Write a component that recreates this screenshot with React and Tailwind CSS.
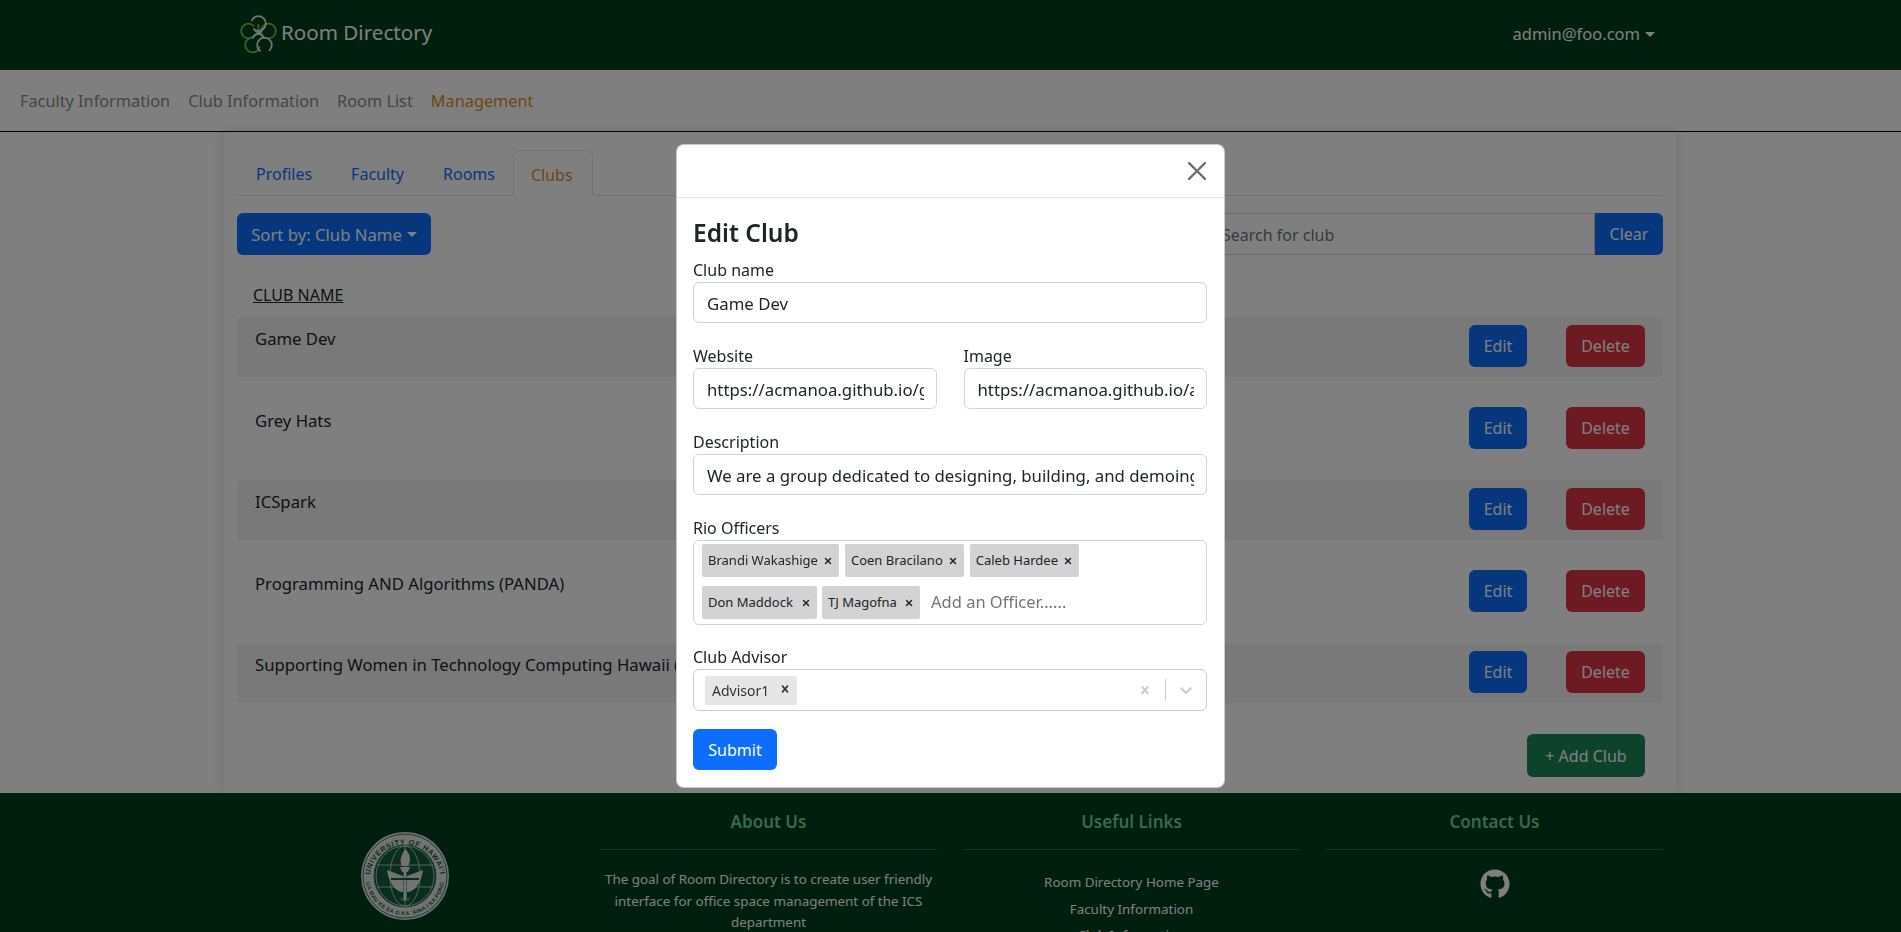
import { X } from "lucide-react";
import { FaGithub } from "react-icons/fa";

const clubs = [
  "Game Dev",
  "Grey Hats",
  "ICSpark",
  "Programming AND Algorithms (PANDA)",
  "Supporting Women in Technology Computing Hawaii (SWITCH)",
];

const Caret = () => (
  <span className="inline-block ml-[5px] border-t-[5px] border-x-[5px] border-x-transparent border-t-current align-middle"></span>
);

const Logo = () => (
  <svg width="37" height="39" viewBox="0 0 37 39" fill="none" strokeWidth="1.8" strokeLinecap="round">
    <circle cx="8.5" cy="16" r="7.3" stroke="#6fcb3f" strokeDasharray="36 10" strokeDashoffset="-4" />
    <circle cx="28.5" cy="16" r="7.3" stroke="#6fcb3f" strokeDasharray="36 10" strokeDashoffset="26" />
    <circle cx="12.5" cy="30" r="7.3" stroke="#6fcb3f" strokeDasharray="30 16" strokeDashoffset="-2" />
    <circle cx="24.5" cy="30" r="7.3" stroke="#e8e8e8" strokeDasharray="36 10" strokeDashoffset="30" />
    <circle cx="18.5" cy="8.5" r="7.3" stroke="#e8e8e8" strokeDasharray="34 12" strokeDashoffset="-26" />
    <path d="M14 14 C16 18 22 18 24 23 M23 14 C21 18 15 18 13 23" stroke="#e8e8e8" />
    <path d="M18.5 10 V14" stroke="#6fcb3f" />
  </svg>
);

const Seal = () => (
  <svg width="88" height="88" viewBox="0 0 88 88">
    <circle cx="44" cy="44" r="44" fill="#e4e4e4" />
    <circle cx="44" cy="44" r="42" fill="none" stroke="#2c7a52" strokeWidth="1" />
    <circle cx="44" cy="44" r="31" fill="#155c3c" stroke="#2c7a52" strokeWidth="1" />
    <defs>
      <path id="sealTop" d="M8.5 48 A35.5 35.5 0 0 1 79.5 48" />
      <path id="sealBottom" d="M5 50 A39.5 39.5 0 0 0 83 50" />
    </defs>
    <text fill="#155c3c" fontSize="7.4" fontWeight="700" letterSpacing="0.7" fontFamily="'Liberation Sans', sans-serif">
      <textPath href="#sealTop" startOffset="50%" textAnchor="middle">UNIVERSITY OF HAWAI'I</textPath>
    </text>
    <text fill="#155c3c" fontSize="5.4" fontWeight="700" letterSpacing="0.35" fontFamily="'Liberation Sans', sans-serif">
      <textPath href="#sealBottom" startOffset="50%" textAnchor="middle">UA MAU KE EA O KA 'ĀINA I KA PONO</textPath>
    </text>
    <g fill="none" stroke="#cfe0d6" strokeWidth="0.8">
      <ellipse cx="44" cy="44" rx="29" ry="30" />
      <ellipse cx="44" cy="44" rx="15" ry="30" />
      <path d="M16 33 H72 M16 55 H72 M44 14 V74" />
    </g>
    <path d="M44 17 C50 22 50 29 47 34 H41 C38 29 40 24 44 17 Z" fill="#e4e4e4" />
    <path d="M39 35 H49 L47 40 H41 Z" fill="#e4e4e4" />
    <path d="M26 38 L42 44 V60 C35 60 28 52 26 38 Z" fill="#e4e4e4" />
    <path d="M62 38 L46 44 V60 C53 60 60 52 62 38 Z" fill="#e4e4e4" />
    <rect x="42.5" y="40" width="3" height="28" fill="#e4e4e4" />
    <path d="M30 47 H58" stroke="#155c3c" strokeWidth="2" />
    <text x="44" y="69" fill="#e4e4e4" fontSize="4" textAnchor="middle" fontFamily="'Liberation Sans', sans-serif">1907</text>
  </svg>
);

const Field = ({ label, value, className = "" }) => (
  <div className={className}>
    <label className="block leading-[24px]">{label}</label>
    <input
      readOnly
      value={value}
      className="w-full h-[41px] pl-[13px] pr-[12px] pt-[1px] border border-[#ced4da] rounded-[6px] text-[16.8px] text-[#212529] bg-white outline-none"
    />
  </div>
);

const OfficerTag = ({ name, className = "" }) => (
  <span className={`h-[33px] px-[6px] flex items-center justify-between gap-[5px] bg-[#d3d3d3] rounded-[2px] text-[13px] text-[#212529] ${className}`}>
    {name}
    <X size={10} strokeWidth={3.5} className="mt-[1px]" />
  </span>
);

const EditClubModal = () => (
  <div className="fixed inset-0 bg-black/50">
    <div className="w-[549px] h-[644px] ml-[676px] mt-[144px] bg-white rounded-[8px] border border-black/20 text-[#212529]">
      <div className="h-[53px] border-b border-[#dee2e6] flex items-center justify-end pr-[18px]">
        <svg width="18" height="18" viewBox="0 0 16 16" fill="#6c6c6c">
          <path d="M.293.293a1 1 0 0 1 1.414 0L8 6.586 14.293.293a1 1 0 1 1 1.414 1.414L9.414 8l6.293 6.293a1 1 0 0 1-1.414 1.414L8 9.414l-6.293 6.293a1 1 0 0 1-1.414-1.414L6.586 8 .293 1.707a1 1 0 0 1 0-1.414z" />
        </svg>
      </div>
      <div className="pl-4 pr-[17px] pt-[20px]">
        <h2 className="text-[24.5px] leading-[29px] font-semibold mb-[11px]">Edit Club</h2>
        <Field label="Club name" value="Game Dev" />
        <div className="flex gap-[27px] mt-[21px]">
          <Field className="flex-1" label="Website" value="https://acmanoa.github.io/game-dev" />
          <Field className="flex-1" label="Image" value="https://acmanoa.github.io/assets/game-dev.png" />
        </div>
        <Field
          className="mt-[21px]"
          label="Description"
          value="We are a group dedicated to designing, building, and demoing games"
        />
        <div className="mt-[21px]">
          <label className="block leading-[24px]">Rio Officers</label>
          <div className="h-[85px] border border-[#ced4da] rounded-[6px] pl-[8px] pt-[3px]">
            <div className="flex gap-[6px]">
              <OfficerTag name="Brandi Wakashige" />
              <OfficerTag name="Coen Bracilano" />
              <OfficerTag name="Caleb Hardee" />
            </div>
            <div className="flex gap-[5px] mt-[9px] items-center">
              <OfficerTag name="Don Maddock" className="w-[115px]" />
              <OfficerTag name="TJ Magofna" className="w-[98px]" />
              <span className="ml-[6px] text-[16.5px] text-[#757575] -mt-[1px]">Add an Officer......</span>
            </div>
          </div>
        </div>
        <div className="mt-[20px]">
          <label className="block leading-[24px]">Club Advisor</label>
          <div className="h-[42px] border border-[#cccccc] rounded-[6px] flex items-center pl-[11px]">
            <span className="h-[29px] w-[92px] pl-[7px] flex items-center justify-between bg-[#e6e6e6] rounded-[2px] text-[14px] text-[#333333]">
              Advisor1
              <svg width="14" height="14" viewBox="0 0 20 20" fill="#333333" className="mr-[5px] -mt-[3px]">
                <path d="M14.348 14.849c-0.469 0.469-1.229 0.469-1.697 0l-2.651-3.03-2.651 3.029c-0.469 0.469-1.229 0.469-1.697 0-0.469-0.469-0.469-1.229 0-1.697l2.758-3.15-2.759-3.152c-0.469-0.469-0.469-1.228 0-1.697s1.228-0.469 1.697 0l2.652 3.031 2.651-3.031c0.469-0.469 1.228-0.469 1.697 0s0.469 1.229 0 1.697l-2.758 3.152 2.758 3.15c0.469 0.469 0.469 1.229 0 1.698z" />
              </svg>
            </span>
            <div className="ml-auto flex items-center pr-[10px]">
              <svg width="16" height="16" viewBox="0 0 20 20" fill="#cccccc">
                <path d="M14.348 14.849c-0.469 0.469-1.229 0.469-1.697 0l-2.651-3.03-2.651 3.029c-0.469 0.469-1.229 0.469-1.697 0-0.469-0.469-0.469-1.229 0-1.697l2.758-3.15-2.759-3.152c-0.469-0.469-0.469-1.228 0-1.697s1.228-0.469 1.697 0l2.652 3.031 2.651-3.031c0.469-0.469 1.228-0.469 1.697 0s0.469 1.229 0 1.697l-2.758 3.152 2.758 3.15c0.469 0.469 0.469 1.229 0 1.698z" />
              </svg>
              <span className="w-px h-[22px] bg-[#cccccc] ml-[12px] mr-[10px]"></span>
              <svg width="20" height="20" viewBox="0 0 20 20" fill="#cccccc">
                <path d="M4.516 7.548c0.436-0.446 1.043-0.481 1.576 0l3.908 3.747 3.908-3.747c0.533-0.481 1.141-0.446 1.576 0 0.436 0.445 0.408 1.197 0 1.615-0.406 0.418-4.695 4.502-4.695 4.502-0.217 0.223-0.502 0.335-0.789 0.335s-0.572-0.112-0.789-0.335c0 0-4.287-4.084-4.695-4.502s-0.436-1.17 0-1.615z" />
              </svg>
            </div>
          </div>
        </div>
        <button className="mt-[18px] h-[41px] w-[84px] bg-[#0d6efd] text-white rounded-[6px]">Submit</button>
      </div>
    </div>
  </div>
);

const FooterColumn = ({ title, children }) => (
  <div className="w-[337px]">
    <h5 className="text-[#78cfa0] text-[17px] font-semibold text-center leading-[24px] mt-[17px]">{title}</h5>
    <hr className="border-white/20 mt-[15px] mb-[19px]" />
    {children}
  </div>
);

export default function App() {
  return (
    <div
      className="h-screen overflow-hidden flex flex-col bg-white text-[16px] text-[#212529]"
      style={{ fontFamily: "'Noto Sans', sans-serif" }}
    >
      <header className="h-[70px] shrink-0 bg-[#003e1c]">
        <div className="w-[1452px] ml-[224px] h-full flex items-center justify-between pl-[16px] pr-[21px] pb-[2px]">
          <div className="flex items-center gap-[4px]">
            <Logo />
            <span className="text-white text-[20.6px] -mt-[3px]">Room Directory</span>
          </div>
          <span className="text-white text-[16.5px] flex items-center">
            admin@foo.com
            <Caret />
          </span>
        </div>
      </header>

      <nav className="h-[62px] shrink-0 border-b border-black flex items-center gap-[18px] pl-[20px] pt-[1px] text-[16.3px] text-[#8a8a8a]">
        <span>Faculty Information</span>
        <span>Club Information</span>
        <span>Room List</span>
        <span className="text-[#dd8a1f]">Management</span>
      </nav>

      <main className="h-[661px] shrink-0 w-[1452px] ml-[224px] px-[13px] pt-[18px] shadow-[0_0_12px_rgba(0,0,0,0.15)]">
        <div className="flex border-b border-[#dee2e6] h-[46px] pl-[3px]">
          <a className="px-4 pt-[12px] text-[#0d6efd]">Profiles</a>
          <a className="px-4 pt-[12px] ml-[7px] text-[#0d6efd]">Faculty</a>
          <a className="px-4 pt-[12px] ml-[7px] text-[#0d6efd]">Rooms</a>
          <a className="pl-[17px] pr-[19px] pt-[12px] ml-[2px] h-[46px] text-[#dd8a1f] border border-[#dee2e6] border-b-white rounded-t-[6px] bg-white">
            Clubs
          </a>
        </div>

        <div className="flex justify-between mt-[17px]">
          <button className="h-[42px] w-[194px] pt-[1px] bg-[#0d6efd] text-white text-[16.7px] rounded-[6px] flex items-center justify-center">
            Sort by: Club Name
            <Caret />
          </button>
          <div className="flex">
            <input
              readOnly
              placeholder="Search for club"
              className="w-[387px] h-[42px] px-[13px] pt-[1px] border border-[#ced4da] rounded-l-[6px] outline-none placeholder:text-[#6c757d]"
            />
            <button className="h-[42px] w-[68px] bg-[#0d6efd] text-white rounded-r-[6px]">Clear</button>
          </div>
        </div>

        <div className="mt-[28px] pl-[16px] leading-[24px] underline">CLUB NAME</div>

        <div className="mt-[10px] flex flex-col gap-[21.5px]">
          {clubs.map((club, i) => (
            <div
              key={club}
              className={`h-[60px] flex justify-between px-[18px] pt-[8px] rounded-[4px] ${i % 2 === 0 ? "bg-[#f2f2f2]" : ""}`}
            >
              <span className="pt-[1px] text-[16.7px] whitespace-nowrap">{club}</span>
              <div className="flex gap-[39px]">
                <button className="h-[42px] w-[58px] bg-[#0d6efd] text-white rounded-[6px]">Edit</button>
                <button className="h-[42px] w-[79px] bg-[#dc3545] text-white rounded-[6px]">Delete</button>
              </div>
            </div>
          ))}
        </div>

        <div className="flex justify-end pr-[18px] mt-[31px]">
          <button className="h-[43px] w-[118px] bg-[#198754] text-white rounded-[6px]">+ Add Club</button>
        </div>
      </main>

      <footer className="shrink-0 h-[200px] bg-[#003e1c] text-white text-[13.4px]">
        <div className="w-[1452px] ml-[224px] pr-[13px] flex">
          <div className="w-[376px] flex justify-center pt-[39px] pr-[14px]">
            <Seal />
          </div>
          <div className="flex gap-[26px]">
            <FooterColumn title="About Us">
              <p className="text-center leading-[21.5px]">
                The goal of Room Directory is to create user friendly interface for office space management of the ICS department
              </p>
            </FooterColumn>
            <FooterColumn title="Useful Links">
              <div className="text-center leading-[26.5px] mt-[2px]">
                <p>Room Directory Home Page</p>
                <p>Faculty Information</p>
                <p>Club Information</p>
              </div>
            </FooterColumn>
            <FooterColumn title="Contact Us">
              <div className="flex justify-center">
                <FaGithub size={30} />
              </div>
            </FooterColumn>
          </div>
        </div>
      </footer>

      <EditClubModal />
    </div>
  );
}
